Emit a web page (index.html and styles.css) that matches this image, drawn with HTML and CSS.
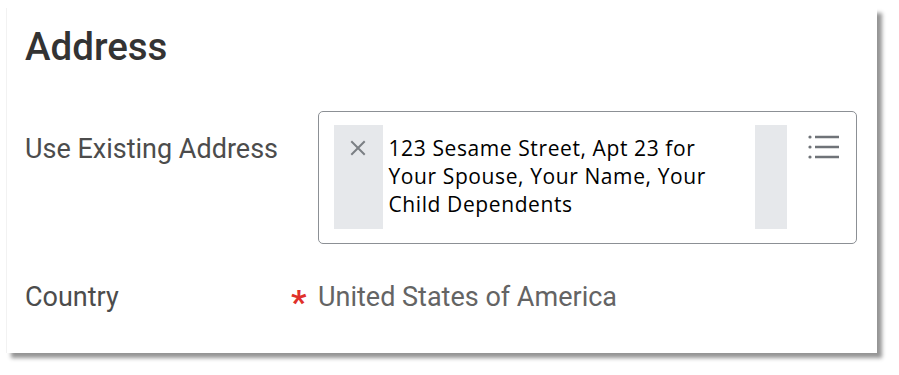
FILE: index.html
```html
<!DOCTYPE html>
<html lang="en">
<head>
<meta charset="utf-8">
<title>Address</title>
<link rel="stylesheet" href="styles.css">
</head>
<body>
<section class="card">
  <h1 class="title">Address</h1>
  <div class="row row-address">
    <div class="label label-top">Use Existing Address</div>
    <div class="spacer"></div>
    <div class="select-box">
      <div class="pill">
        <svg class="x-icon" width="16" height="16" viewBox="0 0 16 16" aria-hidden="true">
          <path d="M2 2 L14 14 M14 2 L2 14" stroke="#7b7f84" stroke-width="2" stroke-linecap="square" fill="none"/>
        </svg>
      </div>
      <div class="selected-text">123 Sesame Street, Apt 23 for<br>Your Spouse, Your Name, Your<br>Child Dependents</div>
      <div class="pill-right"></div>
      <svg class="list-icon" width="34" height="26" viewBox="0 0 34 26" aria-hidden="true">
        <circle cx="3" cy="3" r="1.6" fill="#6f7378"/>
        <circle cx="3" cy="13" r="1.6" fill="#6f7378"/>
        <circle cx="3" cy="23" r="1.6" fill="#6f7378"/>
        <path d="M8 3 H32 M8 13 H32 M8 23 H32" stroke="#6f7378" stroke-width="2.4" fill="none"/>
      </svg>
    </div>
  </div>
  <div class="row row-country">
    <div class="label">Country</div>
    <div class="required">*</div>
    <div class="value">United States of America</div>
  </div>
</section>
</body>
</html>
```
FILE: styles.css
```css
html, body {
  margin: 0;
  padding: 0;
  background: #ffffff;
}

body {
  box-sizing: border-box;
  min-height: 375px;
  padding: 8px 0 0 6px;
  font-family: Roboto, "Liberation Sans", sans-serif;
}

.card {
  box-sizing: border-box;
  width: 871px;
  height: 345px;
  background: #ffffff;
  border-left: 1px solid #f2f2f2;
  box-shadow: 5px 5px 4px rgba(0, 0, 0, 0.42);
  padding: 16px 0 0 18px;
}

.title {
  margin: 0;
  font-family: Roboto, "Liberation Sans", sans-serif;
  font-weight: 500;
  font-size: 38.5px;
  line-height: 46px;
  color: #333333;
}

.row {
  display: flex;
  align-items: flex-start;
}

.row-address {
  margin-top: 41px;
}

.label {
  width: 266px;
  font-size: 27px;
  line-height: 32px;
  color: #4c4c4c;
}

.label-top {
  padding-top: 22px;
}

.spacer {
  width: 27px;
}

.select-box {
  box-sizing: border-box;
  width: 539px;
  height: 133px;
  border: 1.5px solid #8c9095;
  border-radius: 5px;
  display: flex;
  align-items: flex-start;
  padding: 12.5px 15px 0 14.5px;
}

.pill {
  width: 49px;
  height: 104px;
  background: #e6e8eb;
  display: flex;
  justify-content: center;
  padding-top: 15px;
  box-sizing: border-box;
}

.selected-text {
  margin-left: 6px;
  padding-top: 9px;
  width: 360px;
  font-family: "Open Sans", "Noto Sans", sans-serif;
  font-size: 21px;
  font-weight: 400;
  letter-spacing: 0.6px;
  line-height: 28px;
  color: #000000;
}

.pill-right {
  margin-left: auto;
  width: 32px;
  height: 104px;
  background: #e6e8eb;
}

.list-icon {
  margin-left: 20px;
  margin-top: 9px;
}

.row-country {
  margin-top: 37px;
}

.required {
  width: 27px;
  font-size: 34px;
  font-weight: 700;
  line-height: 32px;
  color: #e0302a;
  padding-top: 5px;
  box-sizing: border-box;
}

.value {
  font-size: 27px;
  line-height: 32px;
  color: #646464;
}
```
